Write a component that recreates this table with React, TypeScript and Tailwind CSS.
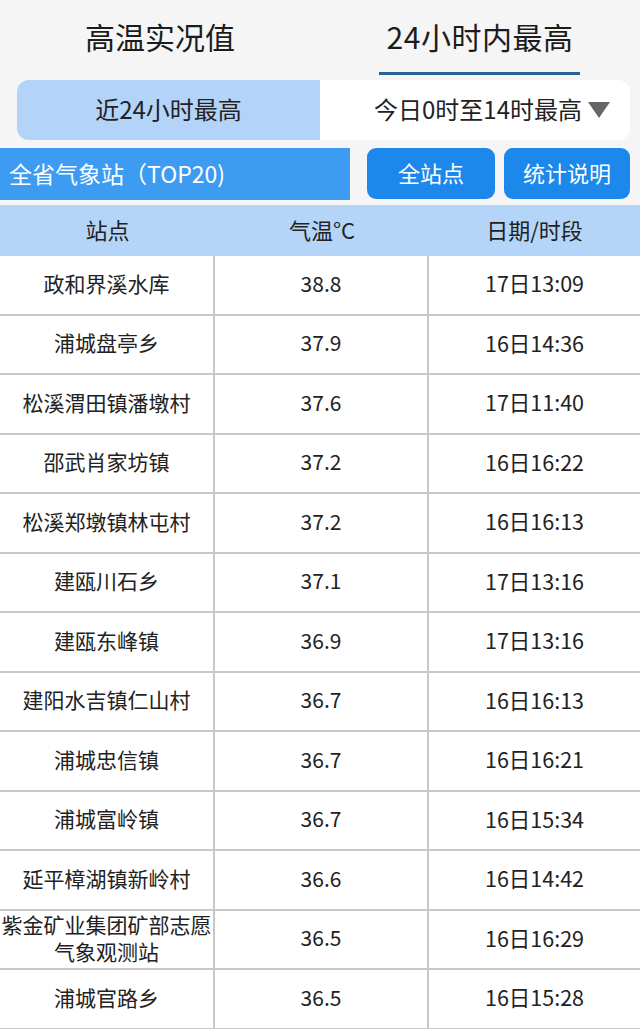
import React from "react";

const rows: [string, string, string][] = [
  ["政和界溪水库", "38.8", "17日13:09"],
  ["浦城盘亭乡", "37.9", "16日14:36"],
  ["松溪渭田镇潘墩村", "37.6", "17日11:40"],
  ["邵武肖家坊镇", "37.2", "16日16:22"],
  ["松溪郑墩镇林屯村", "37.2", "16日16:13"],
  ["建瓯川石乡", "37.1", "17日13:16"],
  ["建瓯东峰镇", "36.9", "17日13:16"],
  ["建阳水吉镇仁山村", "36.7", "16日16:13"],
  ["浦城忠信镇", "36.7", "16日16:21"],
  ["浦城富岭镇", "36.7", "16日15:34"],
  ["延平樟湖镇新岭村", "36.6", "16日14:42"],
  ["紫金矿业集团矿部志愿\n气象观测站", "36.5", "16日16:29"],
  ["浦城官路乡", "36.5", "16日15:28"],
];

export default function App() {
  return (
    <div
      className="w-[640px] h-[1029px] overflow-hidden bg-[#f5f5f5] text-[#222]"
      style={{ fontFamily: '"Noto Sans CJK SC", "Noto Sans", sans-serif' }}
    >
      {/* Tabs */}
      <div className="flex h-[75px]">
        <div className="flex-1 flex flex-col items-center">
          <div className="mt-[20px] text-[30px] leading-[32px] text-[#1c1c1c]">高温实况值</div>
        </div>
        <div className="flex-1 flex flex-col items-center">
          <div className="mt-[20px] text-[30px] leading-[32px] text-[#1c1c1c] tracking-[0.5px]">24小时内最高</div>
          <div className="mt-[20px] w-[201px] h-[3px] bg-[#2d6291] -translate-x-[1px]" />
        </div>
      </div>

      {/* Segmented control */}
      <div className="mt-[5px] ml-[17px] w-[613px] h-[60px] flex rounded-[12px] overflow-hidden">
        <div className="w-[303px] bg-[#b3d3f8] flex items-center justify-center text-[24px] pb-[2px]">
          近24小时最高
        </div>
        <div className="flex-1 bg-white flex items-center justify-end pr-[20px] text-[24px] pb-[2px]">
          今日0时至14时最高
          <svg width="22" height="16" viewBox="0 0 22 16" className="ml-[6px] mt-[2px]">
            <path d="M0 0 H22 L11 16 Z" fill="#666" />
          </svg>
        </div>
      </div>

      {/* Station bar + buttons */}
      <div className="mt-[8px] h-[52px] flex">
        <div className="w-[350px] bg-[#3d9cf2] flex items-center pl-[9px] text-white text-[23px] pb-[2px]">
          全省气象站（TOP20)
        </div>
        <div className="ml-[17px] w-[128px] h-[51px] rounded-[9px] bg-[#1c88ec] flex items-center justify-center text-white text-[22px] pb-[2px]">
          全站点
        </div>
        <div className="ml-[9px] w-[126px] h-[51px] rounded-[9px] bg-[#1c88ec] flex items-center justify-center text-white text-[22px] pb-[2px]">
          统计说明
        </div>
      </div>

      {/* Table header */}
      <div className="mt-[5px] h-[51px] bg-[#b5d5f8] grid grid-cols-[215px_214px_1fr] items-center text-center text-[22px] pb-[2px]">
        <div>站点</div>
        <div>气温°C</div>
        <div>日期/时段</div>
      </div>

      {/* Table rows */}
      <div className="bg-white">
        {rows.map(([name, t, d], i) => (
          <div key={i} className="grid grid-cols-[215px_214px_1fr] h-[59.5px] border-b-2 border-[#c8c8c8] text-[21px]">
            <div className="border-r-2 border-[#c8c8c8] flex items-center justify-center text-center leading-[27px] whitespace-pre-line pb-[3px]">
              {name}
            </div>
            <div className="border-r-2 border-[#c8c8c8] flex items-center justify-center pb-[3px]">{t}</div>
            <div className="flex items-center justify-center pb-[3px] text-[21.5px]">{d}</div>
          </div>
        ))}
      </div>
    </div>
  );
}
